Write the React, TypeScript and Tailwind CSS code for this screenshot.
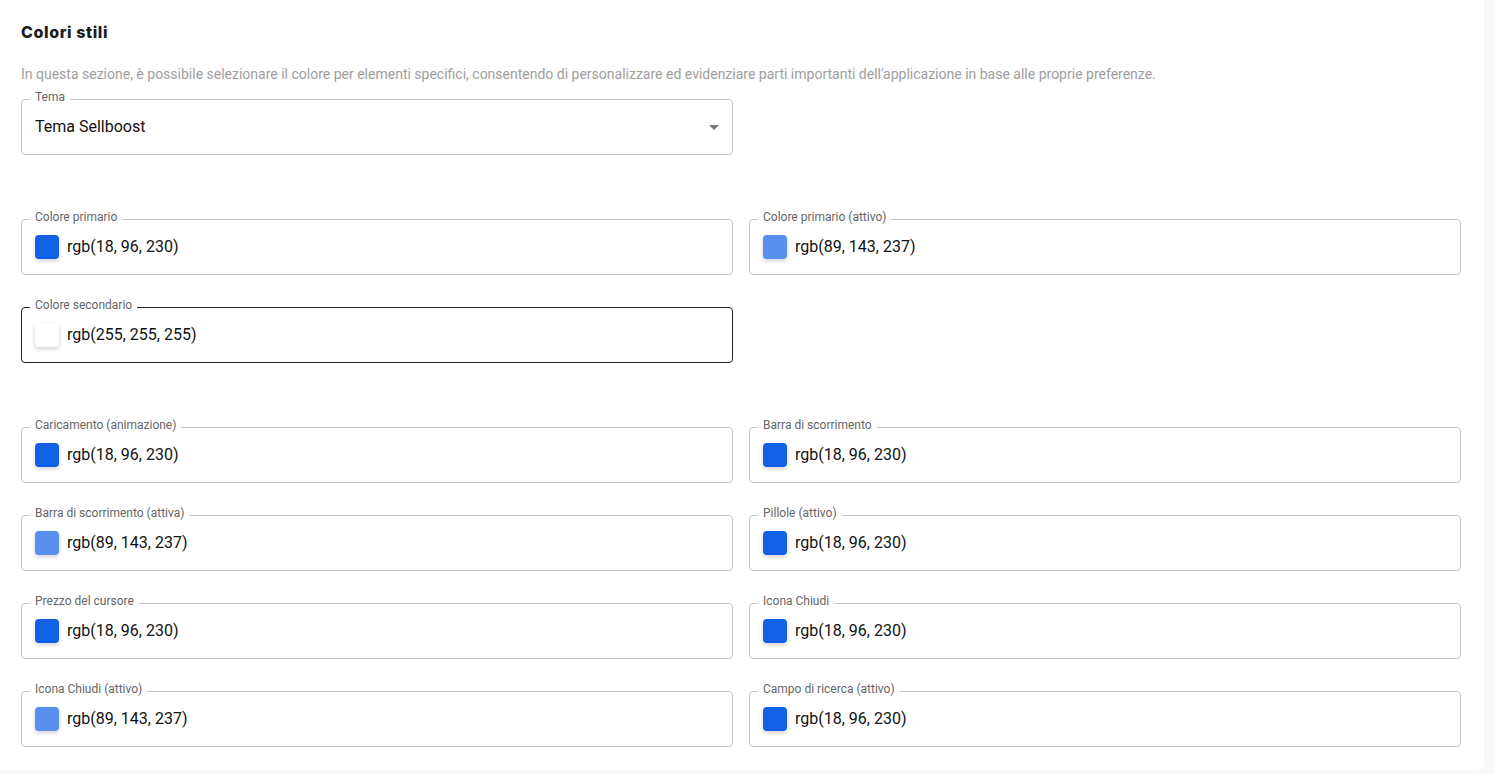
type ColorField = { label: string; value: string };

const main: ColorField[] = [
  { label: 'Colore primario', value: 'rgb(18, 96, 230)' },
  { label: 'Colore primario (attivo)', value: 'rgb(89, 143, 237)' },
];

const extra: ColorField[] = [
  { label: 'Caricamento (animazione)', value: 'rgb(18, 96, 230)' },
  { label: 'Barra di scorrimento', value: 'rgb(18, 96, 230)' },
  { label: 'Barra di scorrimento (attiva)', value: 'rgb(89, 143, 237)' },
  { label: 'Pillole (attivo)', value: 'rgb(18, 96, 230)' },
  { label: 'Prezzo del cursore', value: 'rgb(18, 96, 230)' },
  { label: 'Icona Chiudi', value: 'rgb(18, 96, 230)' },
  { label: 'Icona Chiudi (attivo)', value: 'rgb(89, 143, 237)' },
  { label: 'Campo di ricerca (attivo)', value: 'rgb(18, 96, 230)' },
];

function Outlined({ label, dark, children }: { label: string; dark?: boolean; children: React.ReactNode }) {
  return (
    <div
      className={`relative h-14 rounded-[4px] border flex items-center px-[13px] ${
        dark ? 'border-[#222]' : 'border-[#c4c4c4]'
      }`}
    >
      <span className="absolute -top-[11px] left-[8px] px-[5px] bg-white text-[12px] leading-4 text-[#666]">
        {label}
      </span>
      {children}
    </div>
  );
}

function ColorInput({ field, dark }: { field: ColorField; dark?: boolean }) {
  return (
    <Outlined label={field.label} dark={dark}>
      <span
        className="w-6 h-6 rounded-[4px] shadow-[0_2px_4px_rgba(0,0,0,0.18)] shrink-0"
        style={{ backgroundColor: field.value }}
      />
      <span className="ml-2 text-[16px] text-[#111]">{field.value}</span>
    </Outlined>
  );
}

export default function App() {
  return (
    <div className="min-h-screen bg-[#f8f8f8] font-['Roboto',sans-serif]">
      <div className="w-[1484px] h-[770px] bg-white rounded-br-[6px] pl-[21px] pr-[23px] pt-[22px]">
        <h2 className="text-[16px] font-extrabold text-[#1c1c1c] tracking-[0.6px] font-['Inter',sans-serif] leading-5">
          Colori stili
        </h2>
        <p className="mt-[22px] text-[14px] text-[#9e9e9e] leading-5">
          In questa sezione, è possibile selezionare il colore per elementi specifici, consentendo di personalizzare ed evidenziare parti importanti dell'applicazione in base alle proprie preferenze.
        </p>

        <div className="mt-[15px] w-[712px]">
          <Outlined label="Tema">
            <span className="text-[16px] text-[#111] flex-1">Tema Sellboost</span>
            <svg width="24" height="24" viewBox="0 0 24 24" className="fill-[#757575] mr-[-7px]">
              <path d="M7 10l5 5 5-5z" />
            </svg>
          </Outlined>
        </div>

        <div className="mt-[64px] grid grid-cols-2 gap-x-[16px] gap-y-8">
          {main.map(f => (
            <ColorInput key={f.label} field={f} />
          ))}
          <ColorInput field={{ label: 'Colore secondario', value: 'rgb(255, 255, 255)' }} dark />
        </div>

        <div className="mt-[64px] grid grid-cols-2 gap-x-[16px] gap-y-8">
          {extra.map(f => (
            <ColorInput key={f.label} field={f} />
          ))}
        </div>
      </div>
    </div>
  );
}
